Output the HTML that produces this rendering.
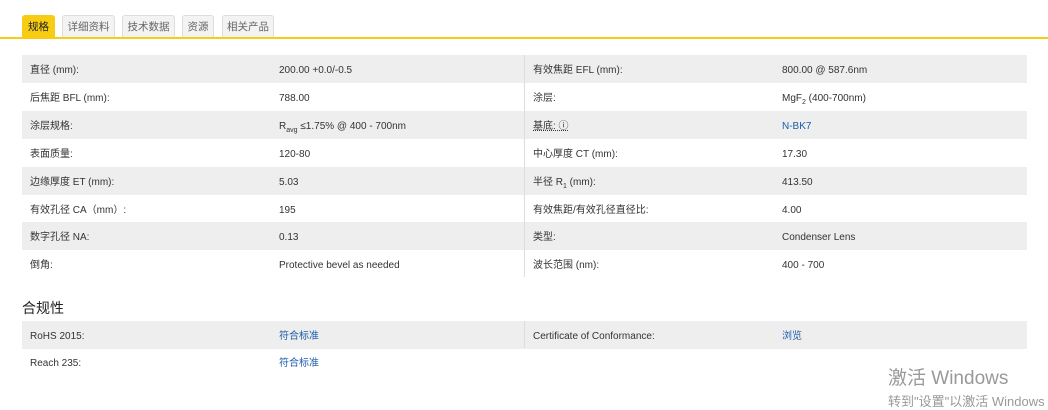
<!DOCTYPE html><html><head><meta charset="utf-8"><style>
body{margin:0;width:1048px;height:401px;overflow:hidden;background:#fff;font-family:"Liberation Sans","Noto Sans CJK SC",sans-serif;color:#333;font-size:10px;position:relative}
.tab{position:absolute;top:15px;height:23px;line-height:23px;text-align:center;font-size:10.5px;color:#666;background:#f3f3f3;border:1px solid #ddd;border-bottom:none;box-sizing:border-box;border-radius:3px 3px 0 0}
.tab.a{background:#f7cc13;color:#222;border-color:#f7cc13}
.line{position:absolute;top:37px;left:0;width:1048px;height:2px;background:#f7cc13}
.row{position:absolute;left:22px;width:1005px;height:28px;line-height:32px}
.g{background:#eeeeee}
.row span{position:absolute;top:0;white-space:nowrap}
sub{font-size:7px;line-height:0}
.l1{left:8px}.v1{left:257px}.l2{left:511px}.v2{left:760px}
.vd{position:absolute;left:524px;top:55px;width:1px;height:222px;background:#ddd}
a{color:#1b5cab;text-decoration:none}
h3{position:absolute;left:22px;top:298px;margin:0;font-size:14px;font-weight:normal;color:#222}
.wm{position:absolute;left:888px;color:#999;white-space:nowrap}
</style></head><body>
<div class="tab a" style="left:22px;width:33px">规格</div>
<div class="tab" style="left:62px;width:53px">详细资料</div>
<div class="tab" style="left:122px;width:53px">技术数据</div>
<div class="tab" style="left:182px;width:32px">资源</div>
<div class="tab" style="left:222px;width:52px">相关产品</div>
<div class="line"></div>
<div class="row g" style="top:55px"><span class="l1">直径 (mm):</span><span class="v1">200.00 +0.0/-0.5</span><span class="l2">有效焦距 EFL (mm):</span><span class="v2">800.00 @ 587.6nm</span></div>
<div class="row" style="top:83px"><span class="l1">后焦距 BFL (mm):</span><span class="v1">788.00</span><span class="l2">涂层:</span><span class="v2">MgF<sub>2</sub> (400-700nm)</span></div>
<div class="row g" style="top:111px"><span class="l1">涂层规格:</span><span class="v1">R<sub>avg</sub> ≤1.75% @ 400 - 700nm</span><span class="l2" style="text-decoration:underline dotted">基底: ⓘ</span><span class="v2"><a>N-BK7</a></span></div>
<div class="row" style="top:139px"><span class="l1">表面质量:</span><span class="v1">120-80</span><span class="l2">中心厚度 CT (mm):</span><span class="v2">17.30</span></div>
<div class="row g" style="top:167px"><span class="l1">边缘厚度 ET (mm):</span><span class="v1">5.03</span><span class="l2">半径 R<sub>1</sub> (mm):</span><span class="v2">413.50</span></div>
<div class="row" style="top:195px"><span class="l1">有效孔径 CA（mm）:</span><span class="v1">195</span><span class="l2">有效焦距/有效孔径直径比:</span><span class="v2">4.00</span></div>
<div class="row g" style="top:222px"><span class="l1">数字孔径 NA:</span><span class="v1">0.13</span><span class="l2">类型:</span><span class="v2">Condenser Lens</span></div>
<div class="row" style="top:250px"><span class="l1">倒角:</span><span class="v1">Protective bevel as needed</span><span class="l2">波长范围 (nm):</span><span class="v2">400 - 700</span></div>
<div class="vd"></div>
<h3>合规性</h3>
<div class="row g" style="top:321px"><span class="l1">RoHS 2015:</span><span class="v1"><a>符合标准</a></span><span class="l2">Certificate of Conformance:</span><span class="v2"><a>浏览</a></span></div>
<div style="position:absolute;left:524px;top:321px;width:1px;height:27px;background:#ddd"></div>
<div class="row" style="top:348px"><span class="l1">Reach 235:</span><span class="v1"><a>符合标准</a></span></div>
<div class="wm" style="top:363px;font-size:19px">激活 Windows</div>
<div class="wm" style="top:391px;font-size:13px">转到"设置"以激活 Windows</div>
</body></html>
